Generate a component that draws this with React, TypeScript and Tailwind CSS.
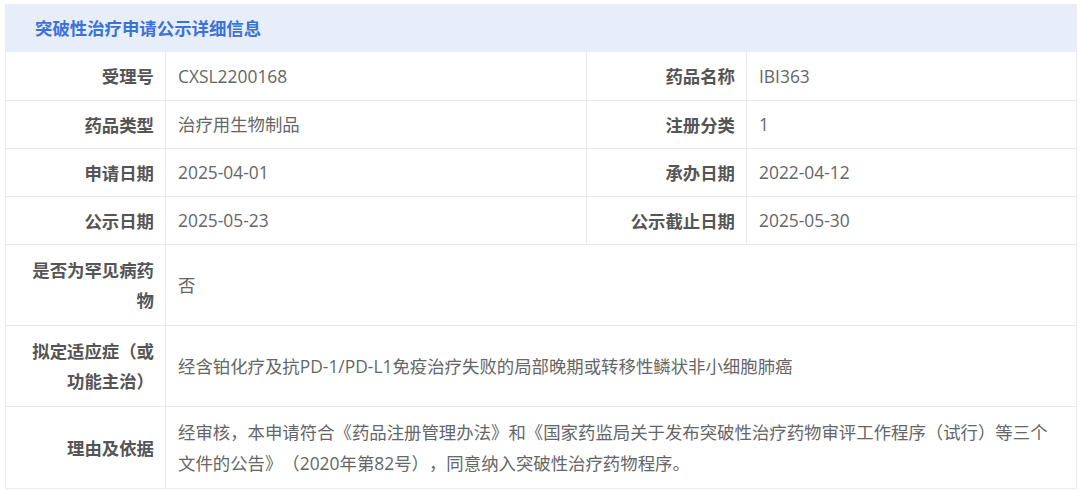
import React from "react";

const font = { fontFamily: '"Open Sans", "Noto Sans CJK SC", sans-serif' };

function Label({ children }: { children: React.ReactNode }) {
  return (
    <div className="flex items-center justify-end text-right pr-[11px] pl-[20px] font-bold text-[#555] text-[17.4px] leading-[30px] border-r border-[#e8e8e8] whitespace-nowrap">
      <div>{children}</div>
    </div>
  );
}

function Value({ children, last }: { children: React.ReactNode; last?: boolean }) {
  return (
    <div
      className={`flex items-center pl-[12px] pr-[12px] text-[#666] text-[17.4px] leading-[31px] whitespace-nowrap ${last ? "" : "border-r border-[#e8e8e8]"}`}
    >
      <div>{children}</div>
    </div>
  );
}

export default function App() {
  const pairs: [string, string, string, string][] = [
    ["受理号", "CXSL2200168", "药品名称", "IBI363"],
    ["药品类型", "治疗用生物制品", "注册分类", "1"],
    ["申请日期", "2025-04-01", "承办日期", "2022-04-12"],
    ["公示日期", "2025-05-23", "公示截止日期", "2025-05-30"],
  ];
  return (
    <div className="w-[1080px] h-[492px] bg-white pt-[4px] pl-[5px] [text-spacing-trim:space-all]" style={font}>
      <div className="w-[1072px] border border-[#ececec]">
        <div className="h-[47px] bg-[#e8eef9] flex items-center pl-[29px]">
          <span className="text-[17.4px] font-bold text-[#3b72d9]">突破性治疗申请公示详细信息</span>
        </div>
        {pairs.map((p, i) => (
          <div key={i} className={`grid grid-cols-[160px_421px_160px_1fr] h-[48px] ${i === 0 ? "" : "border-t border-[#e8e8e8]"}`}>
            <Label>{p[0]}</Label>
            <Value>{p[1]}</Value>
            <Label>{p[2]}</Label>
            <Value last>{p[3]}</Value>
          </div>
        ))}
        <div className="grid grid-cols-[160px_1fr] h-[81px] border-t border-[#e8e8e8]">
          <Label>
            是否为罕见病药
            <br />
            物
          </Label>
          <Value last>否</Value>
        </div>
        <div className="grid grid-cols-[160px_1fr] h-[81px] border-t border-[#e8e8e8]">
          <Label>
            拟定适应症（或
            <br />
            功能主治）
          </Label>
          <Value last>经含铂化疗及抗PD-1/PD-L1免疫治疗失败的局部晚期或转移性鳞状非小细胞肺癌</Value>
        </div>
        <div className="grid grid-cols-[160px_1fr] h-[82px] border-t border-[#e8e8e8]">
          <Label>理由及依据</Label>
          <Value last>
            经审核，本申请符合《药品注册管理办法》和《国家药监局关于发布突破性治疗药物审评工作程序（试行）等三个
            <br />
            文件的公告》（2020年第82号），同意纳入突破性治疗药物程序。
          </Value>
        </div>
      </div>
    </div>
  );
}
